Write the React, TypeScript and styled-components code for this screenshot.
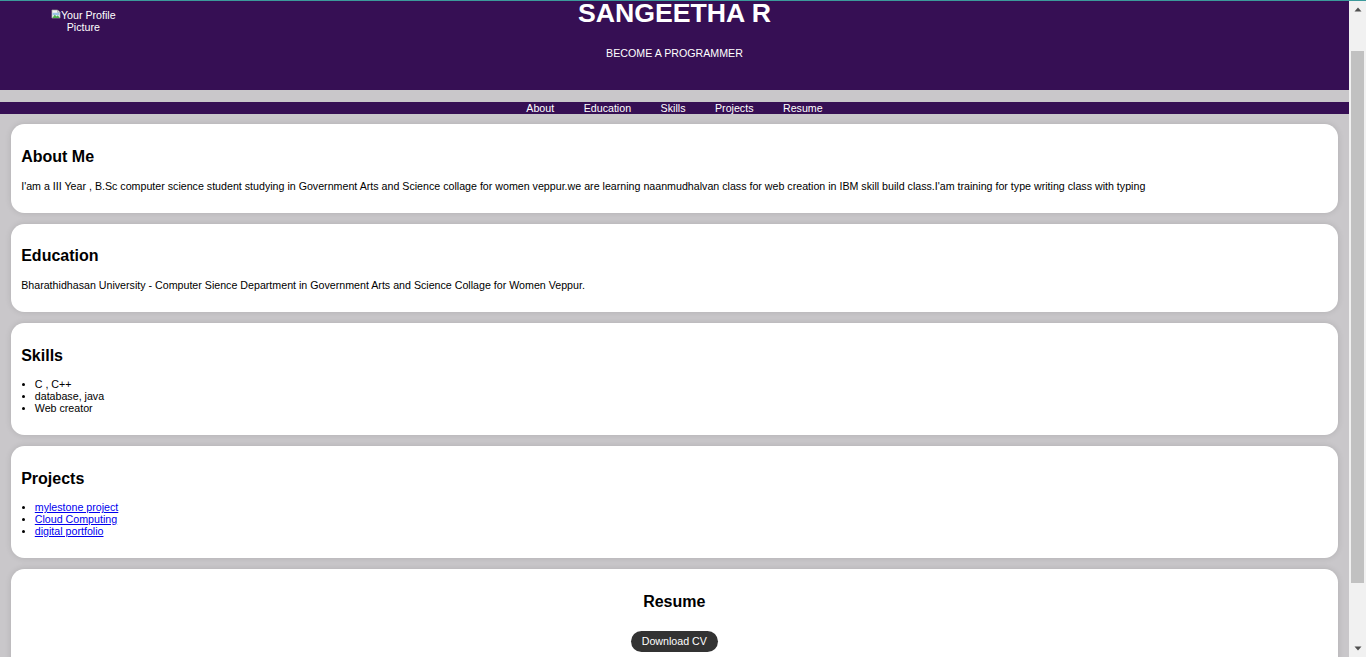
import React from 'react';
import styled, { createGlobalStyle } from 'styled-components';

const GlobalStyle = createGlobalStyle`
  html, body { height: 100%; overflow: hidden; }
  body {
    margin: 0;
    background: #c9c7ca;
    font-family: "Liberation Sans", Arial, sans-serif;
    font-size: 10.67px;
    color: #000;
  }
`;

const Window = styled.div`
  display: flex;
  height: 100vh;
  box-sizing: border-box;
  border-top: 1px solid #3c9a9b;
`;

const Page = styled.div`
  flex: 1;
  min-width: 0;
  overflow: hidden;
`;

const ScrollBar = styled.div`
  width: 17px;
  flex: none;
  display: flex;
  flex-direction: column;
  background: #f1f1f1;
`;

const ArrowButton = styled.div`
  height: 17px;
  flex: none;
  display: flex;
  align-items: center;
  justify-content: center;
`;

const Track = styled.div`
  flex: 1;
  padding: 33px 2px 0;
`;

const Thumb = styled.div`
  height: 532px;
  background: #c1c1c1;
`;

const Header = styled.header`
  display: grid;
  grid-template-columns: 1fr auto 1fr;
  align-items: start;
  background: #360f54;
  color: #fff;
  padding-bottom: 30.5px;
`;

const ProfilePic = styled.div`
  justify-self: start;
  width: 66.67px;
  margin: 7.5px 0 0 50px;
  text-align: center;
  font-size: 10.67px;
  line-height: normal;
`;

const BrokenIcon = styled.svg`
  width: 10px;
  height: 10px;
  vertical-align: baseline;
`;

const TitleBlock = styled.div`
  text-align: center;
`;

const Title = styled.h1`
  margin: 0;
  font-size: 26.67px;
  line-height: 24px;
  font-weight: bold;
`;

const Subtitle = styled.p`
  margin: 22.2px 0 0;
  font-size: 10.67px;
  line-height: normal;
`;

const Nav = styled.nav`
  margin-top: 12px;
  background: #360f54;
  display: flex;
  justify-content: center;
  gap: 29.5px;
  line-height: normal;
`;

const NavLink = styled.a`
  color: #fff;
  text-decoration: none;
  font-size: 10.67px;
`;

const Main = styled.main`
  display: flex;
  flex-direction: column;
  gap: 10.67px;
  padding: 10.7px 11px 10.67px 11px;
`;

const Card = styled.section`
  background: #fff;
  border-radius: 13.33px;
  padding: 10.67px 10.67px 10.67px 10.2px;
  box-shadow: 0 0 6.67px rgba(0, 0, 0, 0.12);
`;

const Heading = styled.h2<{ $center?: boolean }>`
  margin: 13.28px 0;
  font-size: 16px;
  font-weight: bold;
  line-height: normal;
  text-align: ${(p) => (p.$center ? 'center' : 'left')};
`;

const Text = styled.p`
  margin: 10.67px 0;
  font-size: 10.67px;
  line-height: normal;
`;

const List = styled.ul`
  margin: 10.67px 0 10.67px;
  padding: 0;
  list-style: none;
`;

const Item = styled.li`
  display: flex;
  align-items: center;
  line-height: 12px;
  font-size: 10.67px;
  &::before {
    content: '';
    width: 3.3px;
    height: 3.3px;
    border-radius: 50%;
    background: #000;
    margin: 1px 9.8px 0 0.5px;
    flex: none;
  }
`;

const ProjectLink = styled.a`
  color: #0000ee;
  text-decoration: underline;
`;

const ButtonRow = styled.div`
  display: flex;
  justify-content: center;
  margin: 19.65px 0 10.67px;
`;

const DownloadButton = styled.a`
  display: inline-block;
  background: #333;
  color: #fff;
  text-decoration: none;
  font-size: 10.67px;
  line-height: normal;
  padding: 4.67px 10.67px;
  border-radius: 13.33px;
`;

const navItems = ['About', 'Education', 'Skills', 'Projects', 'Resume'];
const skills = ['C , C++', 'database, java', 'Web creator'];
const projects = ['mylestone project', 'Cloud Computing', 'digital portfolio'];

export default function App() {
  return (
    <>
      <GlobalStyle />
      <Window>
        <Page>
          <Header>
            <ProfilePic>
              <BrokenIcon viewBox="0 0 16 16">
                <path d="M1.5 1.5h9l4 4v9h-13z" fill="#f4f4f4" stroke="#9a9a9a" />
                <path d="M10.5 1.5v4h4" fill="#ddd" stroke="#9a9a9a" />
                <rect x="2.5" y="6" width="11" height="4" fill="#9cc3e6" />
                <path d="M2 14.5 L6 9 L9 12 L11 10 L14 14.5z" fill="#4caf50" />
              </BrokenIcon>
              Your Profile Picture
            </ProfilePic>
            <TitleBlock>
              <Title>SANGEETHA R</Title>
              <Subtitle>BECOME A PROGRAMMER</Subtitle>
            </TitleBlock>
          </Header>
          <Nav>
            {navItems.map((n) => (
              <NavLink key={n} href={`#${n.toLowerCase()}`}>
                {n}
              </NavLink>
            ))}
          </Nav>
          <Main>
            <Card id="about">
              <Heading>About Me</Heading>
              <Text>
                I'am a III Year , B.Sc computer science student studying in Government Arts and Science collage for
                women veppur.we are learning naanmudhalvan class for web creation in IBM skill build class.I'am training
                for type writing class with typing
              </Text>
            </Card>
            <Card id="education">
              <Heading>Education</Heading>
              <Text>
                Bharathidhasan University - Computer Sience Department in Government Arts and Science Collage for Women
                Veppur.
              </Text>
            </Card>
            <Card id="skills">
              <Heading>Skills</Heading>
              <List>
                {skills.map((s) => (
                  <Item key={s}>{s}</Item>
                ))}
              </List>
            </Card>
            <Card id="projects">
              <Heading>Projects</Heading>
              <List>
                {projects.map((p) => (
                  <Item key={p}>
                    <ProjectLink href="#">{p}</ProjectLink>
                  </Item>
                ))}
              </List>
            </Card>
            <Card id="resume">
              <Heading $center>Resume</Heading>
              <ButtonRow>
                <DownloadButton href="#">Download CV</DownloadButton>
              </ButtonRow>
            </Card>
          </Main>
        </Page>
        <ScrollBar>
          <ArrowButton>
            <svg width="8" height="5" viewBox="0 0 8 5">
              <path d="M4 0.5 L7.5 4.5 L0.5 4.5z" fill="#505050" />
            </svg>
          </ArrowButton>
          <Track>
            <Thumb />
          </Track>
          <ArrowButton>
            <svg width="8" height="5" viewBox="0 0 8 5">
              <path d="M0.5 0.5 L7.5 0.5 L4 4.5z" fill="#505050" />
            </svg>
          </ArrowButton>
        </ScrollBar>
      </Window>
    </>
  );
}
